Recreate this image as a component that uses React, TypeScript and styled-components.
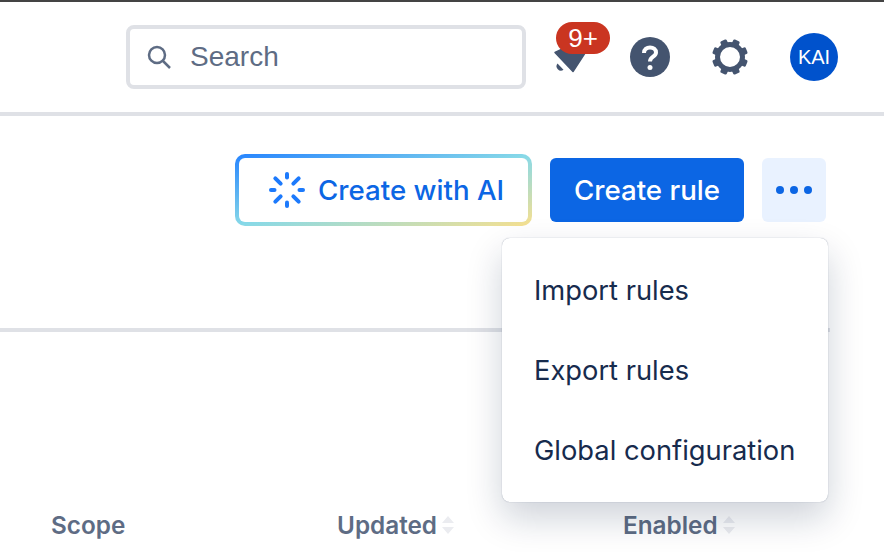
import * as React from 'react'
import styled, { createGlobalStyle } from 'styled-components'

const GlobalStyle = createGlobalStyle`
  html, body {
    margin: 0;
    padding: 0;
    background: #fff;
    overflow: hidden;
  }
  * {
    box-sizing: border-box;
  }
`

const Page = styled.div`
  position: relative;
  width: 884px;
  height: 552px;
  overflow: hidden;
  background: #fff;
  border-top: 2px solid #444;
  font-family: Inter, "Liberation Sans", sans-serif;
  color: #172b4d;
`

const Header = styled.header`
  height: 114px;
  display: flex;
  align-items: center;
  padding: 0 46px 0 126px;
  border-bottom: 4px solid #dfe1e6;
`

const SearchBox = styled.div`
  width: 400px;
  height: 64px;
  display: flex;
  align-items: center;
  gap: 19px;
  padding: 0 17px;
  border: 4px solid #dfe1e6;
  border-radius: 8px;
  font-family: "Liberation Sans", sans-serif;
  font-size: 28px;
  color: #5e6c84;
`

const IconSlot = styled.div<{ $width: number; $margin: number }>`
  position: relative;
  width: ${(p) => p.$width}px;
  margin-left: ${(p) => p.$margin}px;
  display: flex;
  justify-content: center;
  align-items: center;
`

const Badge = styled.span`
  position: absolute;
  left: 3px;
  top: -18px;
  width: 54px;
  height: 32px;
  border-radius: 16px;
  background: #ca3521;
  color: #fff;
  font-family: "Liberation Sans", sans-serif;
  font-size: 26px;
  line-height: 32px;
  text-align: center;
`

const Avatar = styled.div`
  width: 48px;
  height: 48px;
  border-radius: 50%;
  background: #0052cc;
  color: #fff;
  font-family: "Liberation Sans", sans-serif;
  font-size: 20px;
  line-height: 48px;
  text-align: center;
`

const Actions = styled.div`
  height: 212px;
  display: flex;
  justify-content: flex-end;
  align-items: flex-start;
  gap: 18px;
  padding: 42px 58px 0 0;
`

const AiButton = styled.button`
  width: 297px;
  height: 72px;
  margin-top: -4px;
  display: flex;
  align-items: center;
  gap: 13px;
  padding: 0 0 0 30px;
  border: 4px solid transparent;
  border-radius: 10px;
  background:
    linear-gradient(#fff, #fff) padding-box,
    linear-gradient(to bottom right, #2684ff 0%, #87d9e8 50%, #f8e08e 100%) border-box;
  color: #0c66e4;
  font: 500 27.7px Inter, sans-serif;
`

const PrimaryButton = styled.button`
  width: 194px;
  height: 64px;
  padding: 0;
  border: 0;
  border-radius: 6px;
  background: #0c66e4;
  color: #fff;
  font: 500 27.7px Inter, sans-serif;
`

const MoreButton = styled.button`
  width: 64px;
  height: 64px;
  border: 0;
  border-radius: 6px;
  background: #e9f2ff;
  display: flex;
  align-items: center;
  justify-content: center;
  gap: 6px;
  padding: 0;
`

const Dot = styled.i`
  width: 8px;
  height: 8px;
  border-radius: 50%;
  background: #0c66e4;
`

const Divider = styled.div`
  width: 830px;
  height: 4px;
  background: #dfe1e6;
`

const TableHead = styled.div`
  display: grid;
  grid-template-columns: 286px 286px 1fr;
  padding: 178px 0 0 51px;
`

const HeadCell = styled.div`
  display: flex;
  align-items: center;
  gap: 5px;
  height: 30px;
  font-size: 24.3px;
  font-weight: 600;
  color: #5e6c84;
`

const Menu = styled.div`
  position: absolute;
  left: 502px;
  top: 236px;
  width: 326px;
  height: 264px;
  padding: 13px 0 11px;
  border-radius: 8px;
  background: #fff;
  box-shadow: 0 0 1px rgba(9, 30, 66, 0.45), 0 16px 36px rgba(9, 30, 66, 0.2);
`

const MenuItem = styled.div`
  height: 80px;
  padding: 0 32px;
  font-size: 27.3px;
  line-height: 80px;
  white-space: nowrap;
  color: #172b4d;
`

const SortIcon = () => (
  <svg width="12" height="18" viewBox="0 0 12 18" fill="#ebecf0">
    <path d="M6 0l6 7H0zM6 18l6-7H0z" />
  </svg>
)

const BellIcon = () => (
  <svg width="34" height="34" viewBox="0 0 34 34" fill="#44546f">
    <path
      d="M2 12.5L20 31.5 32 13 20 4z"
      stroke="#44546f"
      strokeWidth="1.5"
      strokeLinejoin="round"
    />
    <path d="M4.5 23.5l6 6.300A4.400 4.400 0 0 1 4.500 23.500z" />
  </svg>
)

const HelpIcon = () => (
  <svg width="40" height="40" viewBox="0 0 40 40">
    <circle cx="20" cy="20" r="20" fill="#44546f" />
    <path
      d="M14 16c0-3.600 2.800-5.500 6-5.500 3.500 0 6 2 6 5 0 4.500-6 4-6 9"
      fill="none"
      stroke="#fff"
      strokeWidth="4"
    />
    <circle cx="20" cy="30.5" r="2.5" fill="#fff" />
  </svg>
)

const GearIcon = () => (
  <svg width="38" height="38" viewBox="0 0 38 38" fill="#44546f">
    <g transform="translate(19 19)">
      {[0, 45, 90, 135, 180, 225, 270, 315].map((a) => (
        <rect key={a} x="-3.5" y="-18" width="7" height="7" rx="1.5" transform={`rotate(${a + 22.5})`} />
      ))}
      <circle r="12.5" fill="none" stroke="#44546f" strokeWidth="5" />
    </g>
  </svg>
)

const SearchIcon = () => (
  <svg width="24" height="24" viewBox="0 0 24 24" fill="none" stroke="#5e6c84" strokeWidth="2.5">
    <circle cx="10" cy="10" r="8" />
    <path d="M16 16l7 7" />
  </svg>
)

const SparkIcon = () => (
  <svg width="36" height="36" viewBox="0 0 36 36" stroke="#1d7afc" strokeWidth="4" strokeLinecap="round">
    {[0, 90, 180, 270].map((a) => (
      <path key={a} d="M18 2v3.5" transform={`rotate(${a} 18 18)`} />
    ))}
    {[45, 135, 225, 315].map((a) => (
      <path key={a} d="M18 1.5V9" transform={`rotate(${a} 18 18)`} />
    ))}
  </svg>
)

const App = () => {
  return (
    <Page>
      <GlobalStyle />
      <Header>
        <SearchBox>
          <SearchIcon />
          Search
        </SearchBox>
        <IconSlot $width={34} $margin={27}>
          <BellIcon />
          <Badge>9+</Badge>
        </IconSlot>
        <IconSlot $width={40} $margin={43}>
          <HelpIcon />
        </IconSlot>
        <IconSlot $width={38} $margin={41}>
          <GearIcon />
        </IconSlot>
        <IconSlot $width={48} $margin={41}>
          <Avatar>KAI</Avatar>
        </IconSlot>
      </Header>
      <Actions>
        <AiButton>
          <SparkIcon />
          Create with AI
        </AiButton>
        <PrimaryButton>Create rule</PrimaryButton>
        <MoreButton>
          <Dot />
          <Dot />
          <Dot />
        </MoreButton>
      </Actions>
      <Divider />
      <TableHead>
        <HeadCell>Scope</HeadCell>
        <HeadCell>
          Updated
          <SortIcon />
        </HeadCell>
        <HeadCell>
          Enabled
          <SortIcon />
        </HeadCell>
      </TableHead>
      <Menu>
        <MenuItem>Import rules</MenuItem>
        <MenuItem>Export rules</MenuItem>
        <MenuItem>Global configuration</MenuItem>
      </Menu>
    </Page>
  )
}

export default App
